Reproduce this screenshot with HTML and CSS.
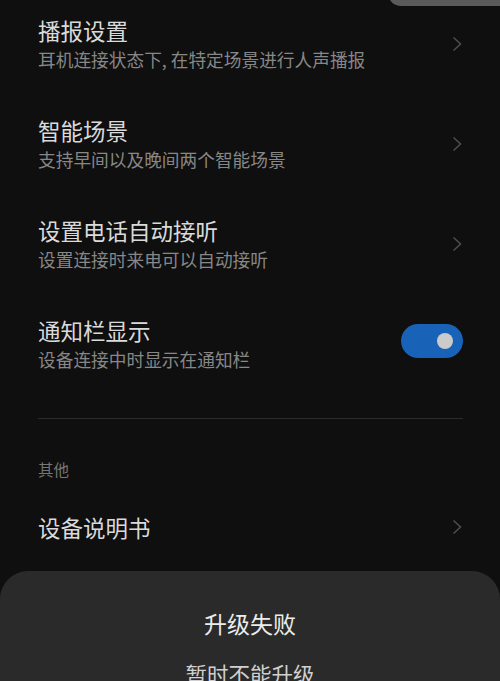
FILE: index.html
```html
<!DOCTYPE html>
<html lang="zh-CN">
<head>
<meta charset="utf-8">
<link rel="stylesheet" href="styles.css">
</head>
<body>
<div class="screen">
  <div class="top-popup"></div>
  <div class="list">
    <div class="row">
      <div class="text">
        <div class="title">播报设置</div>
        <div class="sub">耳机连接状态下, 在特定场景进行人声播报</div>
      </div>
      <svg class="chev" viewBox="0 0 10 16"><path d="M1.5 1.5 L8.5 8 L1.5 14.5" /></svg>
    </div>
    <div class="row">
      <div class="text">
        <div class="title">智能场景</div>
        <div class="sub">支持早间以及晚间两个智能场景</div>
      </div>
      <svg class="chev" viewBox="0 0 10 16"><path d="M1.5 1.5 L8.5 8 L1.5 14.5" /></svg>
    </div>
    <div class="row">
      <div class="text">
        <div class="title">设置电话自动接听</div>
        <div class="sub">设置连接时来电可以自动接听</div>
      </div>
      <svg class="chev" viewBox="0 0 10 16"><path d="M1.5 1.5 L8.5 8 L1.5 14.5" /></svg>
    </div>
    <div class="row">
      <div class="text">
        <div class="title">通知栏显示</div>
        <div class="sub">设备连接中时显示在通知栏</div>
      </div>
      <div class="toggle"><div class="knob"></div></div>
    </div>
    <div class="divider"></div>
    <div class="section">其他</div>
    <div class="row single">
      <div class="text">
        <div class="title">设备说明书</div>
      </div>
      <svg class="chev" viewBox="0 0 10 16"><path d="M1.5 1.5 L8.5 8 L1.5 14.5" /></svg>
    </div>
  </div>
  <div class="dialog">
    <div class="dlg-title">升级失败</div>
    <div class="dlg-msg">暂时不能升级</div>
  </div>
</div>
</body>
</html>
```
FILE: styles.css
```css
html, body {
  margin: 0;
  padding: 0;
  background: #0f0f0f;
}
.screen {
  position: relative;
  width: 500px;
  height: 681px;
  overflow: hidden;
  background: #0f0f0f;
  font-family: "Noto Sans CJK SC", "Noto Sans", sans-serif;
}
.top-popup {
  position: absolute;
  top: -20px;
  left: 388px;
  width: 140px;
  height: 26px;
  background: #5a5a5a;
  border-radius: 14px;
}
.list {
  display: flex;
  flex-direction: column;
  padding: 0 37px 0 38px;
}
.row {
  display: flex;
  align-items: center;
  justify-content: space-between;
  height: 100px;
  box-sizing: border-box;
  padding: 15px 0 28px;
}
.text {
  display: flex;
  flex-direction: column;
  gap: 1px;
}
.title {
  font-size: 22.5px;
  line-height: 30px;
  color: #dadada;
}
.sub {
  font-size: 17.7px;
  line-height: 26px;
  color: #878787;
}
.chev {
  width: 10px;
  height: 16px;
  margin-right: 1px;
  fill: none;
  stroke: #4f4f4f;
  stroke-width: 1.5;
}
.toggle {
  width: 62px;
  height: 34px;
  border-radius: 17px;
  background: #1862b8;
  display: flex;
  align-items: center;
  justify-content: flex-end;
  padding-right: 10px;
  box-sizing: border-box;
  margin-top: -6px;
}
.knob {
  width: 16px;
  height: 16px;
  border-radius: 50%;
  background: #cbcbcb;
}
.divider {
  height: 1px;
  background: #2a2a2a;
  margin-top: 18px;
}
.section {
  margin-top: 40px;
  font-size: 15.5px;
  line-height: 20px;
  color: #767676;
}
.row.single {
  height: auto;
  padding: 33px 0 0;
}
.dialog {
  position: absolute;
  left: 0;
  right: 0;
  top: 571px;
  height: 200px;
  background: #2a2a2a;
  border-radius: 28px 28px 0 0;
  display: flex;
  flex-direction: column;
  align-items: center;
}
.dlg-title {
  margin-top: 36px;
  font-size: 23px;
  line-height: 32px;
  color: #ececec;
}
.dlg-msg {
  margin-top: 20px;
  font-size: 21.5px;
  line-height: 30px;
  color: #d0d0d0;
}
```
